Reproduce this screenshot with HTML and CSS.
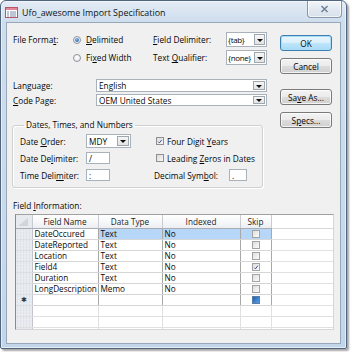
FILE: index.html
```html
<!DOCTYPE html>
<html>
<head>
<meta charset="utf-8">
<link rel="stylesheet" href="styles.css">
</head>
<body>
<div class="window">
  <div class="titlebar">
    <svg class="app-icon" width="13" height="11" viewBox="0 0 13 11">
      <rect x="0.5" y="0.5" width="12" height="10" fill="#fff" stroke="#b9566a"/>
      <rect x="1" y="1" width="11" height="2" fill="#e0879a"/>
      <rect x="2" y="4.5" width="2" height="1" fill="#7d8da6"/>
      <rect x="5" y="4.5" width="6" height="1" fill="#7d8da6"/>
      <rect x="2" y="6.5" width="2" height="1" fill="#7d8da6"/>
      <rect x="5" y="6.5" width="6" height="1" fill="#7d8da6"/>
      <rect x="2" y="8.5" width="2" height="1" fill="#7d8da6"/>
      <rect x="5" y="8.5" width="6" height="1" fill="#7d8da6"/>
    </svg>
    <span class="title">Ufo_awesome Import Specification</span>
    <div class="close">
      <svg width="9" height="8" viewBox="0 0 9 8"><path d="M1.5 1 L7.5 7 M7.5 1 L1.5 7" stroke="#6f8197" stroke-width="1.5" fill="none"/></svg>
    </div>
  </div>
  <div class="client">
    <div class="top">
      <div class="form">
        <div class="row r-format">
          <span class="lbl w-fmt">File Forma<u>t</u>:</span>
          <span class="opt w-opt"><span class="radio on"></span><span><u>D</u>elimited</span></span>
          <span class="lbl w-lbl2"><u>F</u>ield Delimiter:</span>
          <span class="combo w-small"><span class="val">{tab}</span><span class="drop"></span></span>
        </div>
        <div class="row r-format2">
          <span class="lbl w-fmt"></span>
          <span class="opt w-opt"><span class="radio"></span><span>Fi<u>x</u>ed Width</span></span>
          <span class="lbl w-lbl2">Text <u>Q</u>ualifier:</span>
          <span class="combo w-small"><span class="val">{none}</span><span class="drop"></span></span>
        </div>
        <div class="row r-lang">
          <span class="lbl w-lang">Language:</span>
          <span class="combo w-wide"><span class="val">English</span><span class="drop"></span></span>
        </div>
        <div class="row r-code">
          <span class="lbl w-lang"><u>C</u>ode Page:</span>
          <span class="combo w-wide"><span class="val">OEM United States</span><span class="drop"></span></span>
        </div>

        <fieldset class="group">
          <legend>Dates, Times, and Numbers</legend>
          <div class="grow g1">
            <div class="gleft">
              <span class="lbl w-glbl">Date <u>O</u>rder:</span>
              <span class="combo w-mdy"><span class="val">MDY</span><span class="drop"></span></span>
            </div>
            <div class="gright">
              <span class="check on"><svg width="8" height="8" viewBox="0 0 8 8"><path d="M1.6 4.2 L3.2 5.8 L6.4 1.8" stroke="#2b3f86" stroke-width="1.2" fill="none"/></svg></span>
              <span>Four Digit <u>Y</u>ears</span>
            </div>
          </div>
          <div class="grow g2">
            <div class="gleft">
              <span class="lbl w-glbl">Date De<u>l</u>imiter:</span>
              <span class="tbox w-delim">/</span>
            </div>
            <div class="gright">
              <span class="check"></span>
              <span>Leading <u>Z</u>eros in Dates</span>
            </div>
          </div>
          <div class="grow g3">
            <div class="gleft">
              <span class="lbl w-glbl">Time Deli<u>m</u>iter:</span>
              <span class="tbox w-delim">:</span>
            </div>
            <div class="gright">
              <span class="lbl w-dec">Decimal Sym<u>b</u>ol:</span>
              <span class="tbox w-dot">.</span>
            </div>
          </div>
        </fieldset>
      </div>
      <div class="buttons">
        <div class="btn default">OK</div>
        <div class="btn gap-s">Cancel</div>
        <div class="btn gap-l">Sa<u>v</u>e As...</div>
        <div class="btn gap-s">S<u>p</u>ecs...</div>
      </div>
    </div>

    <div class="fi-label">Field <u>I</u>nformation:</div>
    <div class="grid">
      <table class="sheet">
        <colgroup>
          <col class="c-sel"><col class="c-name"><col class="c-type"><col class="c-idx"><col class="c-skip"><col class="c-fill">
        </colgroup>
        <thead>
          <tr>
            <th class="sel corner"><span class="tri"></span></th>
            <th>Field Name</th>
            <th>Data Type</th>
            <th>Indexed</th>
            <th>Skip</th>
            <th class="fill"></th>
          </tr>
        </thead>
        <tbody>
          <tr class="current">
            <td class="sel"></td><td class="edit">DateOccured</td><td class="hl">Text</td><td class="hl">No</td><td class="hl skip"><span class="cb"></span></td><td class="fill"></td>
          </tr>
          <tr>
            <td class="sel"></td><td>DateReported</td><td>Text</td><td>No</td><td class="skip"><span class="cb"></span></td><td class="fill"></td>
          </tr>
          <tr>
            <td class="sel"></td><td>Location</td><td>Text</td><td>No</td><td class="skip"><span class="cb"></span></td><td class="fill"></td>
          </tr>
          <tr>
            <td class="sel"></td><td>Field4</td><td>Text</td><td>No</td><td class="skip"><span class="cb"><svg width="8" height="8" viewBox="0 0 8 8"><path d="M1.8 4.3 L3.3 5.9 L6.3 1.6" stroke="#2a3f8c" stroke-width="1.2" fill="none"/></svg></span></td><td class="fill"></td>
          </tr>
          <tr>
            <td class="sel"></td><td>Duration</td><td>Text</td><td>No</td><td class="skip"><span class="cb"></span></td><td class="fill"></td>
          </tr>
          <tr>
            <td class="sel"></td><td>LongDescription</td><td>Memo</td><td>No</td><td class="skip"><span class="cb"></span></td><td class="fill"></td>
          </tr>
          <tr class="newrow">
            <td class="sel star">✱</td><td></td><td></td><td></td><td class="skip"><span class="cb blue"></span></td><td class="fill"></td>
          </tr>
          <tr class="empty">
            <td class="sel"></td><td></td><td></td><td></td><td></td><td class="fill"></td>
          </tr>
          <tr class="empty">
            <td class="sel"></td><td></td><td></td><td></td><td></td><td class="fill"></td>
          </tr>
          <tr class="empty">
            <td class="sel"></td><td></td><td></td><td></td><td></td><td class="fill"></td>
          </tr>
        </tbody>
      </table>
    </div>
  </div>
</div>
</body>
</html>
```

FILE: styles.css
```css
* { box-sizing: border-box; }

html, body {
  margin: 0;
  width: 351px;
  height: 352px;
  overflow: hidden;
  background: #ffffff;
}

body {
  font-family: "Open Sans", "Liberation Sans", sans-serif;
  font-size: 8.3px;
  color: #050505;
}

u { text-decoration-thickness: 1px; text-underline-offset: 1px; }

.window {
  width: 347px;
  height: 349px;
  border: 1px solid #51667e;
  border-radius: 6px 6px 2px 2px;
  background: linear-gradient(180deg, #e3ecf6 0px, #cfdeed 20px, #c3d6e9 100%);
  box-shadow: 2px 2px 2px rgba(0, 0, 0, 0.35), inset 0 0 0 1px rgba(255, 255, 255, 0.55);
  display: flex;
  flex-direction: column;
  padding: 0 5px 4px 5px;
}

.titlebar {
  height: 21px;
  display: flex;
  align-items: center;
  margin-left: -1px;
  margin-right: -1px;
}

.app-icon { flex: none; margin-top: 1px; }

.title {
  margin-left: 4px;
  font-size: 8.9px;
  color: #0d1520;
  margin-top: 1px;
}

.close {
  margin-left: auto;
  align-self: flex-start;
  width: 35px;
  height: 17px;
  border: 1px solid #8798ab;
  border-top: none;
  border-radius: 0 0 4px 4px;
  background: linear-gradient(180deg, #f4f7fb 0%, #e2e9f1 50%, #d7e0ea 100%);
  box-shadow: inset 0 0 0 1px rgba(255, 255, 255, 0.7);
  display: flex;
  align-items: center;
  justify-content: center;
}

.client {
  flex: 1;
  background: #f0f0f0;
  border: 1px solid #98a8ba;
  padding: 9px 0 0 6px;
  display: flex;
  flex-direction: column;
}

.top { display: flex; align-items: flex-start; }

.form { width: 254px; }

.row { display: flex; align-items: center; }
.r-format { height: 15px; }
.r-format2 { height: 15px; margin-top: 3px; }
.r-lang { height: 13px; margin-top: 14px; }
.r-code { height: 12px; margin-top: 2px; }

.lbl { flex: none; white-space: nowrap; }
.w-fmt { width: 60px; }
.w-opt { width: 80px; }
.w-lbl2 { width: 73px; }
.w-lang { width: 83px; }

.opt { display: flex; align-items: center; white-space: nowrap; flex: none; }

.radio {
  width: 8px;
  height: 8px;
  border-radius: 50%;
  border: 1px solid #8d949c;
  background: radial-gradient(circle at 50% 40%, #ffffff 0%, #e4e4e4 100%);
  margin-right: 5px;
  flex: none;
  display: flex;
  align-items: center;
  justify-content: center;
}
.radio.on::after {
  content: "";
  width: 4px;
  height: 4px;
  border-radius: 50%;
  background: radial-gradient(circle at 40% 35%, #7fb6ea 0%, #1c5fa9 90%);
}

.combo {
  display: flex;
  align-items: stretch;
  height: 100%;
  background: #ffffff;
  border: 1px solid #a9b1ba;
  flex: none;
}
.combo .val {
  flex: 1;
  padding-left: 2px;
  display: flex;
  align-items: center;
  white-space: nowrap;
  overflow: hidden;
}
.combo .drop {
  width: 12px;
  flex: none;
  margin: 1px;
  border: 1px solid #9ea6ae;
  background: linear-gradient(180deg, #f6f6f6 0%, #e3e3e3 100%);
  display: flex;
  align-items: center;
  justify-content: center;
}
.combo .drop::after {
  content: "";
  border-left: 3px solid transparent;
  border-right: 3px solid transparent;
  border-top: 3px solid #111;
  margin-top: 1px;
}
.w-small { width: 41px; }
.w-small .val { padding-left: 1px; letter-spacing: -0.35px; font-size: 8px; }
.w-small .drop { width: 11px; }
.w-wide { width: 171px; }
.w-mdy { width: 45px; height: 14px; }

.buttons {
  margin-left: 13px;
  width: 52px;
  display: flex;
  flex-direction: column;
}

.btn {
  height: 16px;
  border: 1px solid #7a7a7a;
  border-radius: 3px;
  background: linear-gradient(180deg, #f3f3f3 0%, #ebebeb 48%, #dcdcdc 52%, #d0d0d0 100%);
  box-shadow: inset 0 0 0 1px rgba(255, 255, 255, 0.75);
  display: flex;
  align-items: center;
  justify-content: center;
  white-space: nowrap;
  color: #050505;
}
.btn.default {
  margin-top: 3px;
  border-color: #3c7fb1;
  box-shadow: inset 0 0 0 1px #a9dcf6;
  background: linear-gradient(180deg, #eaf6fd 0%, #d9f0fc 48%, #bee6fd 52%, #a7d9f5 100%);
}
.btn.gap-s { margin-top: 7px; }
.btn.gap-l { margin-top: 15px; }

.group {
  margin: 13px 0 0 -1px;
  width: 251px;
  height: 69px;
  border: 1px solid #d0d0d0;
  border-radius: 3px;
  box-shadow: inset 1px 1px 0 #ffffff, 1px 1px 0 #ffffff;
  padding: 3px 0 0 7px;
  min-width: 0;
}
.group legend {
  padding: 0 2px;
  margin-left: 4px;
  line-height: 12px;
}

.grow { display: flex; align-items: center; }
.g1 { height: 14px; }
.g2 { height: 12px; margin-top: 4px; }
.g3 { height: 12px; margin-top: 5px; }

.gleft { width: 134px; display: flex; align-items: center; height: 100%; flex: none; }
.gright { display: flex; align-items: center; height: 100%; white-space: nowrap; }
.w-glbl { width: 66px; }
.w-dec { width: 75px; }

.check {
  width: 8px;
  height: 8px;
  border: 1px solid #8e8f8f;
  background: linear-gradient(135deg, #dcdcdc 0%, #f7f7f7 100%);
  margin: 0 3px 0 2px;
  flex: none;
  display: flex;
  align-items: center;
  justify-content: center;
}
.check svg { width: 7px; height: 7px; }

.tbox {
  height: 100%;
  background: #ffffff;
  border: 1px solid #a9b1ba;
  padding-left: 2px;
  display: flex;
  align-items: center;
  flex: none;
}
.w-delim { width: 24px; }
.w-dot { width: 18px; }

.fi-label {
  margin-top: 12px;
  line-height: 12px;
  height: 12px;
}

.grid {
  margin: 2px 0 0 2px;
  width: 319px;
  height: 116px;
  overflow: hidden;
  background: #ffffff;
  border-left: 1px solid #8a8a8a;
  border-top: 1px solid #a0a0a0;
  border-right: 1px solid #d6d6d6;
  border-bottom: 1px solid #d6d6d6;
}

.sheet {
  border-collapse: collapse;
  table-layout: fixed;
  width: 318px;
  font-size: 8.2px;
}
.c-sel { width: 16px; }
.c-name { width: 66px; }
.c-type { width: 64px; }
.c-idx { width: 78px; }
.c-skip { width: 31px; }
.c-fill { width: 63px; }

.sheet th {
  height: 13px;
  padding: 0;
  font-weight: normal;
  color: #1e1e1e;
  background: linear-gradient(180deg, #ffffff 0%, #f5f6f8 60%, #eceef1 100%);
  border-right: 1px solid #c9ccd1;
  border-bottom: 1px solid #a9adb3;
  text-align: center;
  white-space: nowrap;
}
.sheet th.fill { background: #ffffff; border-right: 1px solid #e2e2e2; border-bottom: 1px solid #d8d8d8; }
.sheet th.corner {
  background: #e7eaee;
  position: relative;
}
.tri {
  position: absolute;
  left: 2px;
  bottom: 2px;
  border-left: 10px solid transparent;
  border-bottom: 8px solid #d0d5dc;
}

.sheet td {
  height: 11px;
  padding: 0 0 0 2px;
  line-height: 10px;
  border-right: 1px solid #a8a8a8;
  border-bottom: 1px solid #d6d6d6;
  white-space: nowrap;
  overflow: hidden;
  color: #0a0a0a;
}
.sheet td.sel {
  padding: 0;
  background-color: #e8ebef;
  background-image: radial-gradient(circle, #d4d8de 0.6px, transparent 0.7px);
  background-size: 3px 3px;
  border-right: 1px solid #c2c6cc;
  border-bottom: 1px solid #dcdfe3;
}
.sheet td.fill { border-right: 1px solid #e2e2e2; border-bottom: 1px solid #e2e2e2; }
.sheet td.hl { background: #b6d7f7; }
.sheet td.edit { background: #ffffff; }
.sheet td.skip { padding: 0; text-align: center; }
.sheet td.star { text-align: center; font-size: 7px; color: #333; }
.sheet tr.empty td { border-right-color: #e0e0e0; border-bottom-color: #e0e0e0; }
.sheet tr.empty td.sel { border-right-color: #c2c6cc; }

.cb {
  display: inline-flex;
  width: 8px;
  height: 8px;
  border: 1px solid #a3a3a3;
  background: linear-gradient(135deg, #dedede 0%, #fbfbfb 100%);
  vertical-align: middle;
  align-items: center;
  justify-content: center;
}
.cb svg { width: 7px; height: 7px; }
.cb.blue {
  border-color: #5a7fa7;
  background: linear-gradient(135deg, #1f5fae 0%, #59a2e6 100%);
}
```
